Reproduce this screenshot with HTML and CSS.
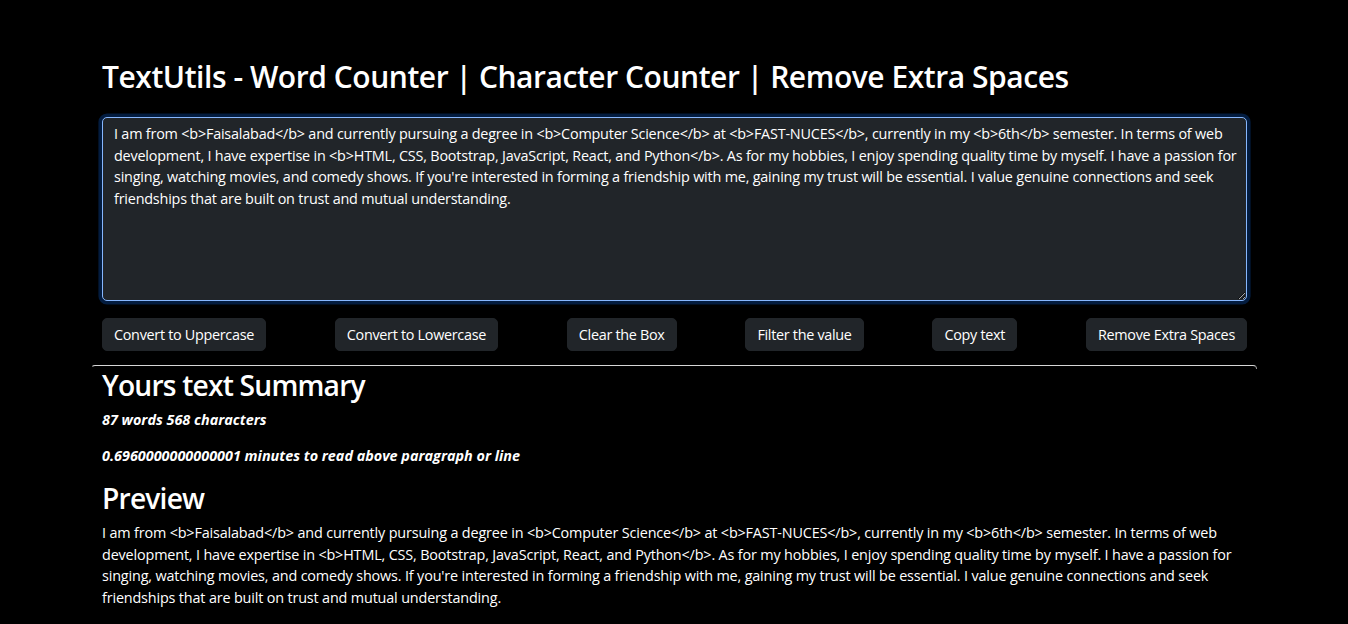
FILE: index.html
```html
<!DOCTYPE html>
<html lang="en">
<head>
<meta charset="utf-8">
<title>TextUtils</title>
<link rel="stylesheet" href="styles.css">
</head>
<body>
<div class="page">
  <div class="section top">
    <h1 class="title">TextUtils - Word Counter | Character Counter | Remove Extra Spaces</h1>
    <textarea class="editor" rows="8">I am from &lt;b&gt;Faisalabad&lt;/b&gt; and currently pursuing a degree in &lt;b&gt;Computer Science&lt;/b&gt; at &lt;b&gt;FAST-NUCES&lt;/b&gt;, currently in my &lt;b&gt;6th&lt;/b&gt; semester. In terms of web development, I have expertise in &lt;b&gt;HTML, CSS, Bootstrap, JavaScript, React, and Python&lt;/b&gt;. As for my hobbies, I enjoy spending quality time by myself. I have a passion for singing, watching movies, and comedy shows. If you're interested in forming a friendship with me, gaining my trust will be essential. I value genuine connections and seek friendships that are built on trust and mutual understanding.</textarea>
    <div class="actions">
      <button class="btn">Convert to Uppercase</button>
      <button class="btn">Convert to Lowercase</button>
      <button class="btn">Clear the Box</button>
      <button class="btn">Filter the value</button>
      <button class="btn">Copy text</button>
      <button class="btn">Remove Extra Spaces</button>
    </div>
  </div>
  <div class="rule"></div>
  <div class="section summary">
    <h2 class="heading">Yours text Summary</h2>
    <p class="stat">87 words 568 characters</p>
    <p class="stat">0.6960000000000001 minutes to read above paragraph or line</p>
    <h2 class="heading">Preview</h2>
    <p class="preview">I am from &lt;b&gt;Faisalabad&lt;/b&gt; and currently pursuing a degree in &lt;b&gt;Computer Science&lt;/b&gt; at &lt;b&gt;FAST-NUCES&lt;/b&gt;, currently in my &lt;b&gt;6th&lt;/b&gt; semester. In terms of web development, I have expertise in &lt;b&gt;HTML, CSS, Bootstrap, JavaScript, React, and Python&lt;/b&gt;. As for my hobbies, I enjoy spending quality time by myself. I have a passion for singing, watching movies, and comedy shows. If you're interested in forming a friendship with me, gaining my trust will be essential. I value genuine connections and seek friendships that are built on trust and mutual understanding.</p>
  </div>
</div>
</body>
</html>
```
FILE: styles.css
```css
html, body {
  margin: 0;
  padding: 0;
  background: #000;
  color: #fff;
  font-family: "Open Sans", "Noto Sans", sans-serif;
  font-size: 14.4px;
  line-height: 21.6px;
  overflow: hidden;
}

.page {
  width: 1166px;
  margin: 0 auto;
  padding-top: 59px;
}

.section {
  padding: 0 10px 0 11px;
}

.title {
  margin: 0 0 22px;
  font-size: 30px;
  font-weight: 600;
  line-height: 36px;
  letter-spacing: -0.45px;
}

.editor {
  display: block;
  box-sizing: border-box;
  width: 100%;
  height: 184px;
  margin: 0;
  padding: 5px 4px 5px 11px;
  background: #212529;
  color: #fff;
  border: 1px solid #86b7fe;
  border-radius: 5px;
  box-shadow: 0 0 0 3.6px rgba(13, 110, 253, 0.25);
  outline: none;
  font-family: inherit;
  font-size: 14.4px;
  line-height: 21.6px;
  letter-spacing: -0.2px;
  resize: vertical;
}

.actions {
  display: flex;
  justify-content: space-between;
  margin-top: 17px;
}

.btn {
  height: 33px;
  padding: 0 11px;
  background: #212529;
  color: #fff;
  border: 1px solid #212529;
  border-radius: 5px;
  font-family: inherit;
  font-size: 14.4px;
  line-height: 21.6px;
  letter-spacing: -0.3px;
}

.rule {
  height: 3px;
  margin-top: 14px;
  border-top: 1px solid #d6d6d6;
  border-left: 1px solid transparent;
  border-right: 1px solid #9a9a9a;
  border-radius: 5px 5px 0 0;
}

.summary {
  margin-top: -1px;
}

.heading {
  margin: 0 0 7px;
  font-size: 28.2px;
  font-weight: 600;
  line-height: 34px;
  letter-spacing: -0.8px;
}

.stat {
  margin: 0 0 14.4px;
  font-weight: 700;
  font-style: italic;
}

.preview {
  margin: 0;
  letter-spacing: -0.16px;
}
```
